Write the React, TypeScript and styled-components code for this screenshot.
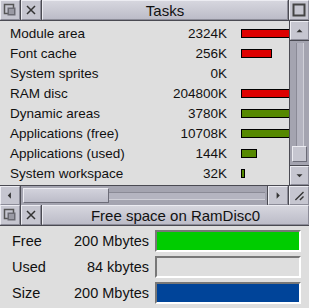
import React from 'react';
import styled, { createGlobalStyle } from 'styled-components';

const GlobalStyle = createGlobalStyle`
  html, body {
    margin: 0;
    padding: 0;
    background: #dcdcdc;
  }
  body {
    font-family: "Liberation Sans", Arial, sans-serif;
    color: #111;
  }
`;

interface TaskRow {
  name: string;
  size: string;
  bar?: number;
  colour?: string;
}

const RED = '#dd0000';
const GREEN = '#558800';

const tasks: TaskRow[] = [
  { name: 'System heap', size: '1024K', bar: 14, colour: RED },
  { name: 'Module area', size: '2324K', bar: 120, colour: RED },
  { name: 'Font cache', size: '256K', bar: 31, colour: RED },
  { name: 'System sprites', size: '0K' },
  { name: 'RAM disc', size: '204800K', bar: 200, colour: RED },
  { name: 'Dynamic areas', size: '3780K', bar: 160, colour: GREEN },
  { name: 'Applications (free)', size: '10708K', bar: 180, colour: GREEN },
  { name: 'Applications (used)', size: '144K', bar: 16, colour: GREEN },
  { name: 'System workspace', size: '32K', bar: 4, colour: GREEN },
];

const discRows = [
  { label: 'Free', value: '200 Mbytes', fill: '#00cc00' },
  { label: 'Used', value: '84 kbytes', fill: 'transparent' },
  { label: 'Size', value: '200 Mbytes', fill: '#004499' },
];

const BackIcon = () => (
  <svg width="20" height="20" viewBox="0 0 20 20">
    <rect x="4.5" y="4.5" width="9" height="9" fill="none" stroke="#555" strokeWidth="1.5" />
    <rect x="7.5" y="7.5" width="8" height="8" fill="#6a6a72" />
    <rect x="9" y="9" width="5" height="5" fill="#9a9aa4" />
  </svg>
);

const CloseIcon = () => (
  <svg width="20" height="20" viewBox="0 0 20 20">
    <path d="M6 6 L14 14 M14 6 L6 14" stroke="#333" strokeWidth="1.5" />
  </svg>
);

const ToggleIcon = () => (
  <svg width="20" height="20" viewBox="0 0 20 20">
    <rect x="4.5" y="4.5" width="11" height="11" fill="none" stroke="#444" strokeWidth="2" />
  </svg>
);

const Arrow = ({ dir }: { dir: 'up' | 'down' | 'left' | 'right' }) => {
  const paths = {
    up: 'M6.5 12 L10 8.5 L13.5 12 Z',
    down: 'M6.5 8.5 L10 12 L13.5 8.5 Z',
    left: 'M11 6.5 L7.5 10 L11 13.5 Z',
    right: 'M8.5 6.5 L12 10 L8.5 13.5 Z',
  };
  return (
    <svg width="19" height="19" viewBox="0 0 20 20">
      <path d={paths[dir]} fill="#333" />
    </svg>
  );
};

const ResizeIcon = () => (
  <svg width="19" height="19" viewBox="0 0 20 20">
    <path d="M6 15 L15 6 M11 15 L15 11" stroke="#333" strokeWidth="1.5" />
  </svg>
);

const App: React.FC = () => (
  <>
    <GlobalStyle />
    <Screen>
      <Window>
        <TitleBar>
          <TitleIcon><BackIcon /></TitleIcon>
          <TitleIcon><CloseIcon /></TitleIcon>
          <Title>Tasks</Title>
          <TitleIcon $last><ToggleIcon /></TitleIcon>
        </TitleBar>
        <Body>
          <Viewport>
            <List>
              {tasks.map(t => (
                <Row key={t.name}>
                  <Name>{t.name}</Name>
                  <Size>{t.size}</Size>
                  {t.bar !== undefined && <Bar $colour={t.colour!} style={{ width: t.bar }} />}
                </Row>
              ))}
            </List>
          </Viewport>
          <VScroll>
            <ScrollButton><Arrow dir="up" /></ScrollButton>
            <VTrough>
              <VGroove />
              <VThumb />
            </VTrough>
            <ScrollButton $bottom><Arrow dir="down" /></ScrollButton>
          </VScroll>
        </Body>
        <HScroll>
          <ScrollButton $side><Arrow dir="left" /></ScrollButton>
          <HTrough>
            <HThumb />
            <HGroove />
          </HTrough>
          <ScrollButton $side $right><Arrow dir="right" /></ScrollButton>
          <ResizeBox><ResizeIcon /></ResizeBox>
        </HScroll>
      </Window>

      <Window>
        <TitleBar>
          <TitleIcon><BackIcon /></TitleIcon>
          <TitleIcon><CloseIcon /></TitleIcon>
          <Title>Free space on RamDisc0</Title>
        </TitleBar>
        <DiscBody>
          {discRows.map(r => (
            <DiscRow key={r.label}>
              <DiscLabel>{r.label}</DiscLabel>
              <DiscValue>{r.value}</DiscValue>
              <DiscBar $fill={r.fill} />
            </DiscRow>
          ))}
        </DiscBody>
      </Window>
    </Screen>
  </>
);

const Screen = styled.div`
  width: 309px;
  height: 308px;
  overflow: hidden;
  display: flex;
  flex-direction: column;
  background: #dcdcdc;
`;

const Window = styled.div`
  display: flex;
  flex-direction: column;
  flex: none;
  &:last-child {
    flex: 1;
  }
`;

const TitleBar = styled.div`
  display: flex;
  height: 20px;
  border-bottom: 1px solid #4a4a52;
  background: #c6c6d0;
`;

const TitleIcon = styled.div<{ $last?: boolean }>`
  width: 20px;
  height: 20px;
  flex: none;
  box-sizing: border-box;
  display: flex;
  align-items: center;
  justify-content: center;
  background: #c6c6d0;
  border-top: 1px solid #ececf2;
  border-left: 1px solid #ececf2;
  border-bottom: 1px solid #8c8c98;
  border-right: 1px solid #8c8c98;
  box-shadow: ${p => (p.$last ? '-1px 0 0 #4a4a52' : '1px 0 0 #4a4a52')};
  margin-right: ${p => (p.$last ? '0' : '1px')};
  margin-left: ${p => (p.$last ? '1px' : '0')};
  svg {
    flex: none;
  }
`;

const Title = styled.div`
  flex: 1;
  display: flex;
  align-items: center;
  justify-content: center;
  box-sizing: border-box;
  font-size: 15px;
  color: #111;
  background: linear-gradient(#d6d6de, #bcbcc8);
  border-top: 1px solid #ececf2;
  border-left: 1px solid #ececf2;
  border-bottom: 1px solid #8c8c98;
  border-right: 1px solid #8c8c98;
`;

const Body = styled.div`
  display: flex;
  height: 164px;
`;

const Viewport = styled.div`
  flex: 1;
  overflow: hidden;
  background: #dedede;
`;

/* content is scrolled down a little, so the first row peeks in at the top */
const List = styled.div`
  margin-top: -18px;
`;

const Row = styled.div`
  display: flex;
  align-items: center;
  height: 20px;
  padding-left: 10px;
  font-size: 13.5px;
  line-height: 17px;
  white-space: nowrap;
`;

const Name = styled.div`
  width: 140px;
  flex: none;
`;

const Size = styled.div`
  width: 77px;
  flex: none;
  text-align: right;
`;

const Bar = styled.div<{ $colour: string }>`
  flex: none;
  height: 9px;
  margin-left: 14px;
  box-sizing: border-box;
  border: 1px solid #000;
  background: ${p => p.$colour};
`;

const VScroll = styled.div`
  width: 20px;
  flex: none;
  display: flex;
  flex-direction: column;
  border-left: 1px solid #4a4a52;
  box-sizing: border-box;
  background: #a2a2ae;
`;

const ScrollButton = styled.div<{ $bottom?: boolean; $side?: boolean; $right?: boolean }>`
  flex: none;
  width: ${p => (p.$side ? '20px' : '19px')};
  height: 19px;
  box-sizing: border-box;
  display: flex;
  align-items: center;
  justify-content: center;
  background: #c6c6d0;
  border-top: 1px solid #ececf2;
  border-left: 1px solid #ececf2;
  border-bottom: 1px solid #8c8c98;
  border-right: 1px solid #8c8c98;
  box-shadow: ${p =>
    p.$bottom ? '0 -1px 0 #4a4a52' : p.$side ? (p.$right ? '-1px 0 0 #4a4a52' : '1px 0 0 #4a4a52') : '0 1px 0 #4a4a52'};
  margin-top: ${p => (p.$bottom ? '1px' : '0')};
  margin-bottom: ${p => (p.$bottom || p.$side ? '0' : '1px')};
  margin-left: ${p => (p.$right ? '1px' : '0')};
  margin-right: ${p => (p.$side && !p.$right ? '1px' : '0')};
`;

const VTrough = styled.div`
  flex: 1;
  display: flex;
  flex-direction: column;
  align-items: center;
  padding: 2px 0 3px;
  background: #a4a4b0;
`;

const VGroove = styled.div`
  flex: 1;
  width: 6px;
  background: #b4b4c0;
  border-left: 1px solid #8a8a96;
  border-right: 1px solid #d0d0d8;
`;

const VThumb = styled.div`
  flex: none;
  width: 15px;
  height: 16px;
  box-sizing: border-box;
  background: #c6c6d0;
  border-top: 1px solid #ececf2;
  border-left: 1px solid #ececf2;
  border-bottom: 1px solid #6c6c78;
  border-right: 1px solid #6c6c78;
`;

const HScroll = styled.div`
  display: flex;
  height: 19px;
  border-top: 1px solid #4a4a52;
  background: #a2a2ae;
`;

const HTrough = styled.div`
  flex: 1;
  display: flex;
  align-items: center;
  padding: 0 2px;
  background: #a4a4b0;
`;

const HThumb = styled.div`
  flex: none;
  width: 86px;
  height: 15px;
  box-sizing: border-box;
  background: linear-gradient(#d2d2dc, #bcbcc8);
  border-top: 1px solid #ececf2;
  border-left: 1px solid #ececf2;
  border-bottom: 1px solid #6c6c78;
  border-right: 1px solid #6c6c78;
`;

const HGroove = styled.div`
  flex: 1;
  height: 6px;
  background: #b4b4c0;
  border-top: 1px solid #8a8a96;
  border-bottom: 1px solid #d0d0d8;
`;

const ResizeBox = styled.div`
  flex: none;
  width: 20px;
  height: 19px;
  box-sizing: border-box;
  display: flex;
  align-items: center;
  justify-content: center;
  margin-left: 1px;
  box-shadow: -1px 0 0 #4a4a52;
  background: #c6c6d0;
  border-top: 1px solid #ececf2;
  border-left: 1px solid #ececf2;
  border-bottom: 1px solid #8c8c98;
  border-right: 1px solid #8c8c98;
`;

const DiscBody = styled.div`
  flex: 1;
  display: flex;
  flex-direction: column;
  gap: 4px;
  padding: 4px 8px 0 12px;
  background: #dedede;
  font-size: 14.5px;
`;

const DiscRow = styled.div`
  display: flex;
  align-items: center;
  height: 22px;
  white-space: nowrap;
`;

const DiscLabel = styled.div`
  width: 50px;
  flex: none;
`;

const DiscValue = styled.div`
  width: 87px;
  flex: none;
  text-align: right;
`;

const DiscBar = styled.div<{ $fill: string }>`
  flex: 1;
  height: 22px;
  margin-left: 6px;
  box-sizing: border-box;
  border-top: 2px solid #777;
  border-left: 2px solid #777;
  border-bottom: 2px solid #fff;
  border-right: 2px solid #fff;
  background: ${p => p.$fill};
`;

export default App;
